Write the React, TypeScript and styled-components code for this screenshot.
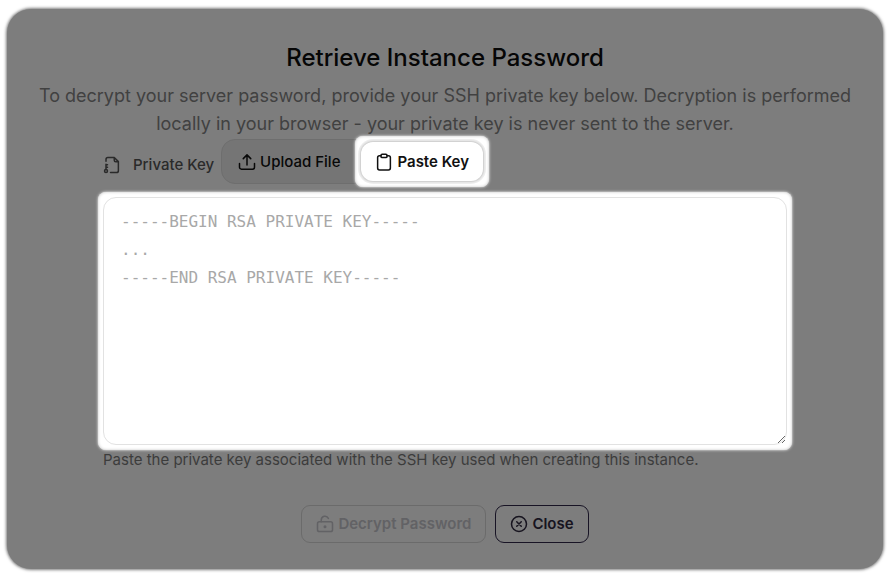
import React from "react";
import styled, { createGlobalStyle, css } from "styled-components";

const GlobalStyle = createGlobalStyle`
  * { box-sizing: border-box; }
  body {
    margin: 0;
    background: #fff;
    font-family: Inter, "Liberation Sans", sans-serif;
  }
`;

const Page = styled.div`
  padding: 9px 7px 8px;
`;

const Dialog = styled.main`
  display: flex;
  flex-direction: column;
  align-items: center;
  padding: 33px 24px 26px;
  border-radius: 24px;
  background: #7d7d7d;
  box-shadow: 0 0 3px 1px #7d7d7d;
`;

const Title = styled.h1`
  margin: 0;
  font-size: 24px;
  line-height: 32px;
  font-weight: 500;
  color: #060606;
`;

const Description = styled.p`
  margin: 8px 0 0;
  font-size: 18px;
  line-height: 28px;
  text-align: center;
  color: #414141;
`;

const KeySection = styled.section`
  width: calc(100% - 144px);
`;

const KeyHeader = styled.div`
  display: flex;
  align-items: center;
  gap: 7px;
  margin-top: 1px;
`;

const KeyLabel = styled.label`
  display: flex;
  align-items: center;
  gap: 12px;
  padding-top: 6px;
  font-size: 15px;
  line-height: 24px;
  font-weight: 500;
  color: #2a2a2a;
`;

const Tabs = styled.div`
  display: flex;
  gap: 7px;
  padding: 2px;
  border: 1px solid #6e6e6e;
  border-radius: 14px;
  background: #757575;
`;

const Spotlight = styled.div<{ $reach: number }>`
  margin: -${({ $reach }) => $reach}px;
  padding: ${({ $reach }) => $reach}px;
  border-radius: 8px;
  background: #fff;
  box-shadow: 0 0 3px #fff, inset 0 0 3px #c4c4c4;
`;

const Tab = styled.button<{ $active?: boolean }>`
  display: flex;
  align-items: center;
  gap: 4px;
  height: 39px;
  padding: 0 14px;
  border: 0;
  border-radius: 12px;
  background: transparent;
  font: 500 15px/24px Inter, sans-serif;
  color: #080808;
  ${({ $active }) =>
    $active &&
    css`
      background: #fff;
      font-weight: 600;
      color: #111;
      box-shadow: 0 0 2px 1px #c8c8c8, 0 0 0 3px #f0f0f0;
    `}
`;

const KeyInput = styled.textarea`
  display: block;
  width: 100%;
  height: 248px;
  padding: 10px 17px;
  border: 1px solid #e2e2e2;
  border-radius: 13px;
  outline: 0;
  background: #fff;
  font: 16px/28px "DejaVu Sans Mono", monospace;
  resize: both;
  &::placeholder { color: #a8a8a8; }
`;

const InputArea = styled.div`
  margin-top: 13px;
  padding-bottom: 3px;
`;

const Hint = styled.p`
  margin: 0;
  font-size: 15px;
  line-height: 24px;
  color: #3c3c3c;
`;

const Actions = styled.div`
  display: flex;
  gap: 9px;
  margin-top: 33px;
`;

const ActionButton = styled.button`
  display: flex;
  align-items: center;
  gap: 4px;
  height: 38px;
  padding: 0 14px;
  border: 1px solid #181425;
  border-radius: 9px;
  background: transparent;
  font: 600 15px/24px Inter, sans-serif;
  color: #17141f;
  &:disabled {
    border-color: #6b6b6b;
    color: #626265;
  }
`;

const Icon = styled.svg`
  display: block;
  flex: none;
  width: 18px;
  height: 18px;
  fill: none;
  stroke: currentColor;
  stroke-width: 2;
  stroke-linecap: round;
  stroke-linejoin: round;
`;

export default function App() {
  return (
    <Page>
      <GlobalStyle />
      <Dialog>
        <Title>Retrieve Instance Password</Title>
        <Description>
          To decrypt your server password, provide your SSH private key below. Decryption is performed
          locally in your browser - your private key is never sent to the server.
        </Description>
        <KeySection>
          <KeyHeader>
            <KeyLabel htmlFor="private-key">
              <Icon viewBox="0 0 24 24" aria-hidden="true">
                <path d="M4 7V4.500a2.500 2.500 0 0 1 2.500-2.500H15l5.500 5.500v12a2.500 2.500 0 0 1-2.500 2.500H10M15 2v3.500a2 2 0 0 0 2 2h3.500" />
                <circle cx="4" cy="20" r="2" />
                <path d="M4 18V11M4 11.500h2M4 15h2" />
              </Icon>
              Private Key
            </KeyLabel>
            <Tabs role="tablist">
              <Tab type="button" role="tab" aria-selected="false">
                <Icon viewBox="0 0 24 24" aria-hidden="true">
                  <path d="M12 16V2.500M7 7.500l5-5 5 5M2 14v5a2.500 2.500 0 0 0 2.500 2.500h15A2.500 2.500 0 0 0 22 19v-5" />
                </Icon>
                Upload File
              </Tab>
              <Spotlight $reach={6}>
                <Tab type="button" role="tab" aria-selected="true" $active>
                  <Icon viewBox="0 0 24 24" aria-hidden="true">
                    <path d="M8 3.500H6A2.500 2.500 0 0 0 3.500 6v14A2.500 2.500 0 0 0 6 22.500h12a2.500 2.500 0 0 0 2.500-2.500V6A2.500 2.500 0 0 0 18 3.500h-2" />
                    <rect x="8" y="1.500" width="8" height="4.500" rx="1.500" />
                  </Icon>
                  Paste Key
                </Tab>
              </Spotlight>
            </Tabs>
          </KeyHeader>
          <InputArea>
            <Spotlight $reach={5}>
              <KeyInput
                id="private-key"
                spellCheck={false}
                placeholder={"-----BEGIN RSA PRIVATE KEY-----\n...\n-----END RSA PRIVATE KEY-----"}
              />
            </Spotlight>
          </InputArea>
          <Hint>Paste the private key associated with the SSH key used when creating this instance.</Hint>
        </KeySection>
        <Actions>
          <ActionButton type="button" disabled>
            <Icon viewBox="0 0 24 24" aria-hidden="true">
              <rect x="2" y="9" width="20" height="13" rx="2.500" />
              <path d="M7 9V6.500a5 5 0 0 1 9.500-2" />
              <circle cx="12" cy="15.500" r="1" fill="currentColor" />
            </Icon>
            Decrypt Password
          </ActionButton>
          <ActionButton type="button">
            <Icon viewBox="0 0 24 24" aria-hidden="true">
              <circle cx="12" cy="12" r="10" />
              <path d="m9 9 6 6m0-6-6 6" />
            </Icon>
            Close
          </ActionButton>
        </Actions>
      </Dialog>
    </Page>
  );
}
